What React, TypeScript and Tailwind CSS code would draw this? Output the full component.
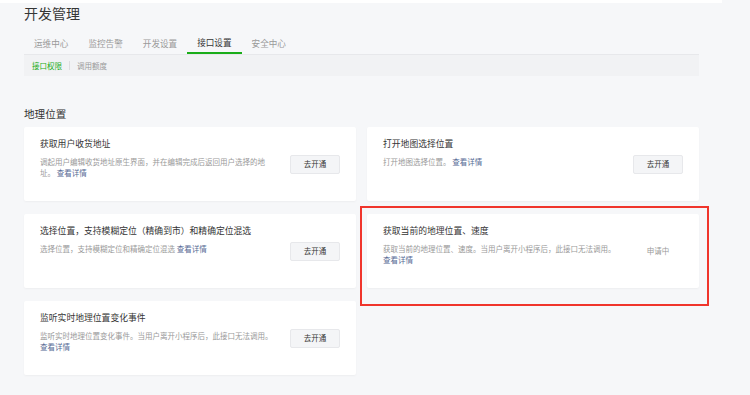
import React from 'react';

interface Api {
  title: string;
  desc: string;
  descW: string;
  status?: string;
  marked?: boolean;
}

const apis: Api[] = [
  { title: '获取用户收货地址', desc: '调起用户编辑收货地址原生界面，并在编辑完成后返回用户选择的地址。', descW: 'w-[226px]' },
  { title: '打开地图选择位置', desc: '打开地图选择位置。', descW: 'w-[240px]' },
  { title: '选择位置，支持模糊定位（精确到市）和精确定位混选', desc: '选择位置，支持模糊定位和精确定位混选', descW: 'w-[240px]' },
  { title: '获取当前的地理位置、速度', desc: '获取当前的地理位置、速度。当用户离开小程序后，此接口无法调用。', descW: 'w-[240px]', status: '申请中', marked: true },
  { title: '监听实时地理位置变化事件', desc: '监听实时地理位置变化事件。当用户离开小程序后，此接口无法调用。', descW: 'w-[240px]' },
];

const tabs = ['运维中心', '监控告警', '开发设置', '接口设置', '安全中心'];

const ApiCard: React.FC<{ api: Api }> = ({ api }) => {
  return (
    <div className="relative h-[74px] bg-white rounded-[2px] shadow-[0_1px_2px_rgba(0,0,0,0.04)] flex px-[16px]">
      <div className="flex-1 min-w-0 pt-[11px]">
        <div className="text-[8.8px] leading-[12px] text-[#353535]">{api.title}</div>
        <p className={`${api.descW} mt-[6px] text-[7.5px] leading-[11px] text-[#9a9a9a]`}>
          {api.desc} <span className="inline-block whitespace-nowrap text-[#576b95]">查看详情</span>
        </p>
      </div>
      <div className="w-[50px] shrink-0 self-center flex justify-center">
        {api.status ? (
          <span className="text-[7.5px] text-[#9a9a9a]">{api.status}</span>
        ) : (
          <button className="w-[50px] h-[19px] rounded-[2px] bg-[#f4f5f7] border border-[#e7e8eb] text-[7.5px] text-[#353535]">
            去开通
          </button>
        )}
      </div>
      {api.marked && (
        <div className="absolute -left-[7px] -top-[8px] -right-[10px] -bottom-[18px] border-2 border-[#f0352c] pointer-events-none" />
      )}
    </div>
  );
};

export default function App() {
  return (
    <div
      className="w-[750px] h-[395px] overflow-hidden bg-[#f6f7f9]"
      style={{ fontFamily: '"Noto Sans CJK SC", "Noto Sans", sans-serif' }}
    >
      <div className="w-[722px] h-[3px] bg-white" />
      <div className="px-[24px] w-[723px]">
        <h1 className="text-[14px] leading-[20px] text-[#353535]">开发管理</h1>

        <div className="mt-[10px] flex border-b border-[#e7e8eb]">
          {tabs.map((t, i) => (
            <div
              key={t}
              className={`px-[10px] h-[21px] flex items-center text-[8.6px] ${
                i === 3 ? 'text-[#353535] border-b-2 border-[#1aad19] -mb-px' : 'text-[#9a9a9a]'
              }`}
            >
              {t}
            </div>
          ))}
        </div>

        <div className="h-[21px] bg-[#f1f2f4] flex items-center pl-[8px] text-[7.5px]">
          <span className="text-[#1aad19]">接口权限</span>
          <span className="mx-[7px] w-px h-[9px] bg-[#dcdde0]" />
          <span className="text-[#9a9a9a]">调用额度</span>
        </div>

        <h2 className="mt-[31px] text-[10.6px] leading-[14px] text-[#353535]">地理位置</h2>

        <div className="mt-[6px] grid grid-cols-2 gap-x-[11px] gap-y-[13px]">
          {apis.map((a) => (
            <ApiCard key={a.title} api={a} />
          ))}
        </div>
      </div>
    </div>
  );
}
